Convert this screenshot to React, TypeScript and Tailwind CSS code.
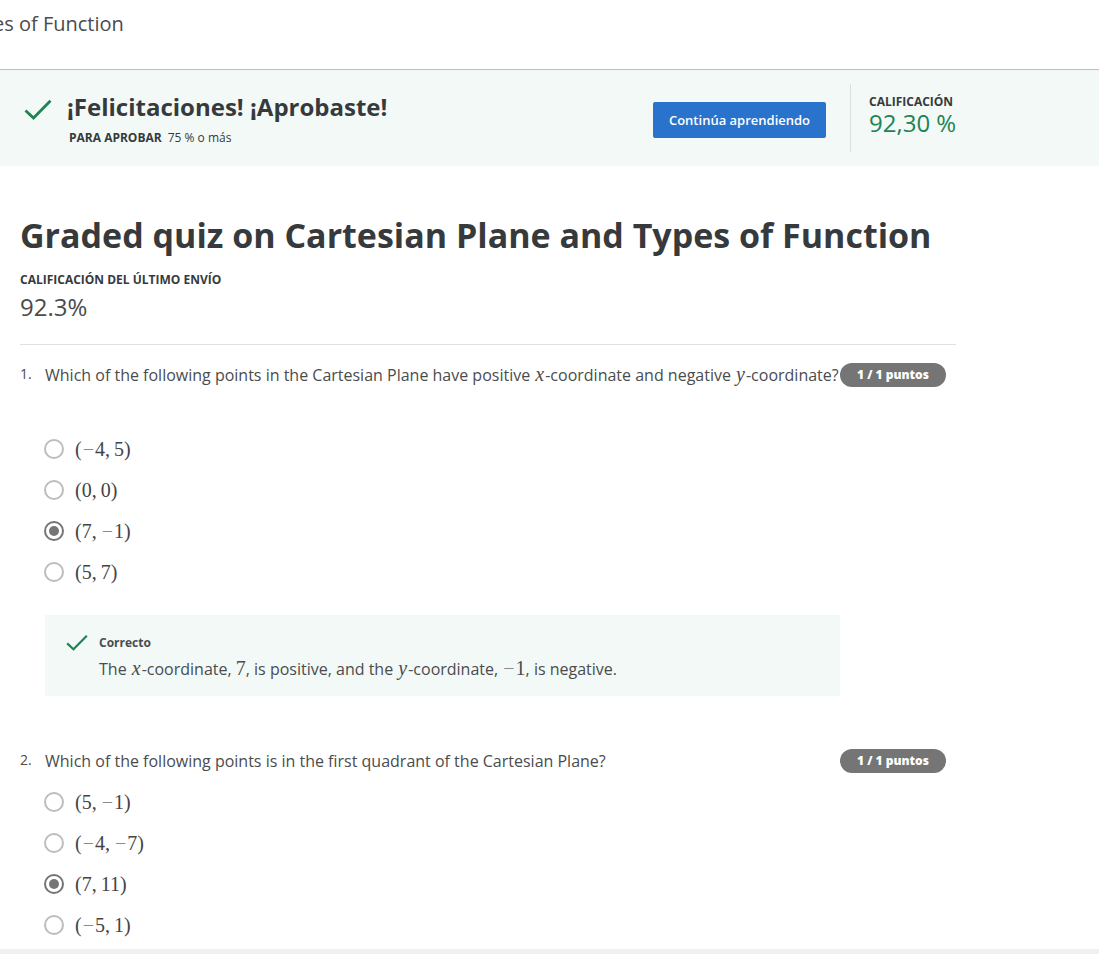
import type { ReactNode } from "react";

function Check({ className }: { className: string }) {
  return (
    <svg viewBox="0 0 28 22" className={className} fill="none" stroke="#1f8354" strokeWidth="2.8" aria-hidden="true">
      <path d="M1.5 11.5 L9.5 19 L26.5 1.8" />
    </svg>
  );
}

function Variable({ children }: { children: string }) {
  return <i className="mx-px font-['Liberation_Serif',serif] text-xl leading-none">{children}</i>;
}

function Num({ value }: { value: number }) {
  return (
    <span className="font-['Liberation_Serif',serif] text-xl leading-none">
      {value < 0 && <span className="mx-px text-[#8a8a8a]">−</span>}
      {Math.abs(value)}
    </span>
  );
}

function Point({ x, y }: { x: number; y: number }) {
  return (
    <span className="font-['Liberation_Serif',serif] text-xl leading-6 text-[#444]">
      (<Num value={x} />
      <span className="mr-1">,</span>
      <Num value={y} />)
    </span>
  );
}

type QuestionProps = {
  number: number;
  prompt: ReactNode;
  points: [number, number][];
  answer: number;
  spaced?: boolean;
  feedback?: ReactNode;
};

function Question({ number, prompt, points, answer, spaced, feedback }: QuestionProps) {
  return (
    <section className="flex items-start text-[#4a4c4e]">
      <span className="w-[25px] shrink-0 text-sm leading-[22px]">{number}.</span>
      <div className="min-w-0 flex-1">
        <div className="flex items-start">
          <p id={`q${number}`} className="min-w-0 flex-1 text-base leading-6 whitespace-nowrap">{prompt}</p>
          <span className="mr-2.5 w-[106px] shrink-0 rounded-full bg-[#757575] text-center text-xs leading-6 font-extrabold text-white">
            1 / 1 puntos
          </span>
        </div>
        <div role="radiogroup" aria-labelledby={`q${number}`} className={spaced ? "mt-[41px]" : "mt-2"}>
          {points.map(([x, y], i) => (
            <label key={i} className="flex h-[41px] items-center gap-[11px]">
              <input
                type="radio"
                name={`question-${number}`}
                defaultChecked={i === answer}
                className="-ml-px size-5 appearance-none rounded-full border-2 border-[#bdbdbd] bg-clip-content p-[3px] checked:border-[#757575] checked:bg-[#757575]"
              />
              <Point x={x} y={y} />
            </label>
          ))}
        </div>
        {feedback && (
          <div className="mt-[23px] mr-[116px] flex h-[81px] gap-[11px] bg-[#f2f9f7] pt-[18px] pl-[21px]">
            <Check className="mt-px h-[18px] w-[22px]" />
            <div>
              <p className="text-xs leading-5 font-bold">Correcto</p>
              <p className="mt-1 text-base leading-6">{feedback}</p>
            </div>
          </div>
        )}
      </div>
    </section>
  );
}

export default function App() {
  return (
    <div className="flex min-h-screen flex-col overflow-hidden bg-white font-['Open_Sans',sans-serif] text-[#373a3c]">
      <header className="h-[70px] border-b border-[#bdbdbd] pt-[9px]">
        <p className="-ml-[7px] text-xl leading-[30px] text-[#4a4c4e]">es of Function</p>
      </header>

      <div className="h-24 bg-[#f2f9f7]">
        <div className="flex max-w-[956px] items-start pl-6">
          <Check className="mt-[29px] h-[22px] w-7" />
          <div className="mt-[19px] ml-[15px] flex-1">
            <h2 className="text-2xl leading-9 font-bold">¡Felicitaciones! ¡Aprobaste!</h2>
            <p className="mt-px ml-0.5 text-xs leading-6">
              <span className="mr-1.5 font-bold">PARA APROBAR</span>
              75 % o más
            </p>
          </div>
          <button type="button" className="mt-8 mr-6 h-9 w-[173px] rounded-xs bg-[#2a73cc] pt-px text-[13px] font-semibold text-white">
            Continúa aprendiendo
          </button>
          <div className="mt-3.5 h-[68px] w-[106px] border-l border-[#dedede] pt-2 pl-[18px] whitespace-nowrap">
            <p className="text-xs leading-5 font-bold">CALIFICACIÓN</p>
            <p className="text-2xl leading-[22px] text-[#1f8354]">92,30 %</p>
          </div>
        </div>
      </div>

      <main className="max-w-[956px] flex-1 pt-[43px] pl-5">
        <h1 className="text-[34px] leading-[52px] font-bold whitespace-nowrap">
          Graded quiz on Cartesian Plane and Types of Function
        </h1>
        <p className="mt-[9px] text-xs leading-5 font-bold">CALIFICACIÓN DEL ÚLTIMO ENVÍO</p>
        <p className="mt-px text-2xl leading-8 text-[#4a4c4e]">92.3%</p>
        <hr className="mt-[21px] mb-[18px] border-[#e0e0e0]" />
        <Question
          number={1}
          prompt={
            <>
              Which of the following points in the Cartesian Plane have positive <Variable>x</Variable>-coordinate and
              negative <Variable>y</Variable>-coordinate?
            </>
          }
          points={[[-4, 5], [0, 0], [7, -1], [5, 7]]}
          answer={2}
          spaced
          feedback={
            <>
              The <Variable>x</Variable>-coordinate, <Num value={7} />, is positive, and the <Variable>y</Variable>
              -coordinate, <Num value={-1} />, is negative.
            </>
          }
        />
        <div className="mt-[53px]">
          <Question
            number={2}
            prompt="Which of the following points is in the first quadrant of the Cartesian Plane?"
            points={[[5, -1], [-4, -7], [7, 11], [-5, 1]]}
            answer={2}
          />
        </div>
      </main>
      <div className="h-[5px] bg-[#f0f0f0]" />
    </div>
  );
}
